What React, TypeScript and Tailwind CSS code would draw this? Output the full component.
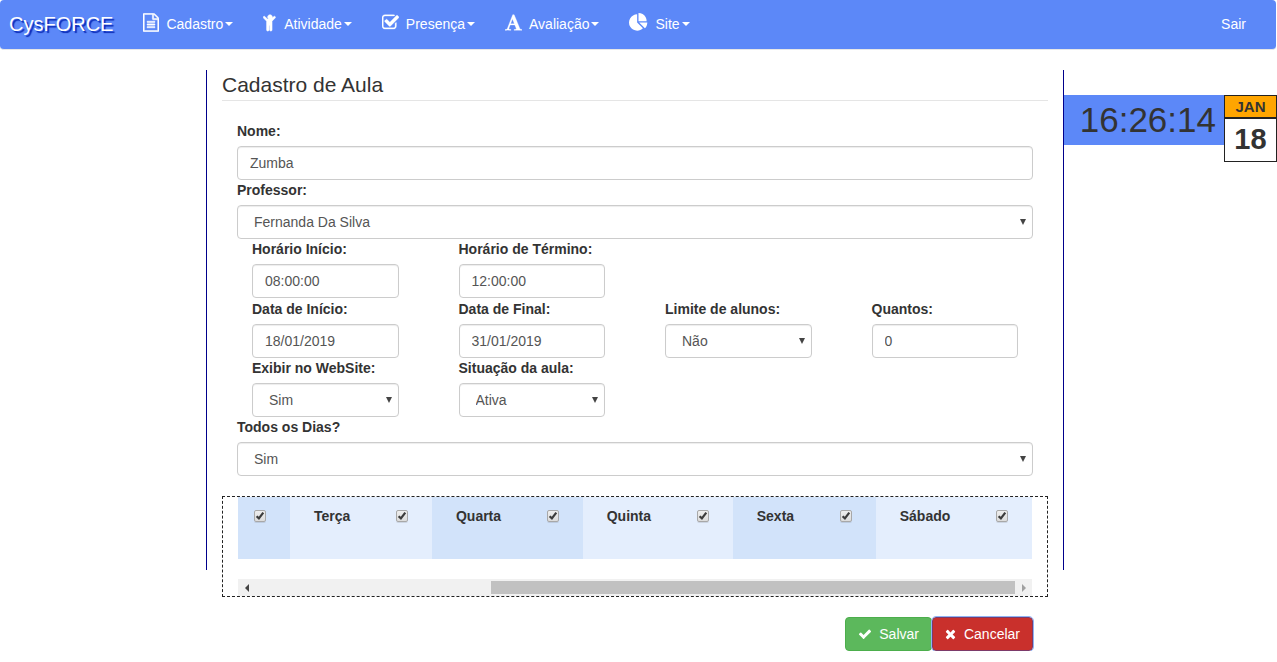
import type { ReactNode } from 'react';

const icons = {
  file: {
    box: '128 0 1536 1792',
    weight: 40,
    path: 'M1596 380q28 28 48 76t20 88v1152q0 40-28 68t-68 28h-1344q-40 0-68-28t-28-68v-1600q0-40 28-68t68-28h896q40 0 88 20t76 48zm-444-244v376h376q-10-29-22-41l-313-313q-12-12-41-22zm384 1528v-1024h-416q-40 0-68-28t-28-68v-416h-768v1536h1280zm-1024-864q0-14 9-23t23-9h704q14 0 23 9t9 23v64q0 14-9 23t-23 9h-704q-14 0-23-9t-9-23v-64zm736 224q14 0 23 9t9 23v64q0 14-9 23t-23 9h-704q-14 0-23-9t-9-23v-64q0-14 9-23t23-9h704zm0 256q14 0 23 9t9 23v64q0 14-9 23t-23 9h-704q-14 0-23-9t-9-23v-64q0-14 9-23t23-9h704z',
  },
  child: {
    box: '272 0 1248 1792',
    weight: 50,
    path: 'M1380 476l-292 292v824q0 46-33 79t-79 33-79-33-33-79v-384h-64v384q0 46-33 79t-79 33-79-33-33-79v-824l-292-292q-28-28-28-68t28-68q29-28 68.500-28t67.500 28l228 228h368l228-228q28-28 68-28t68 28q28 29 28 68.500t-28 67.500zm-260-92q0 93-65.500 158.500t-158.500 65.500-158.500-65.500-65.500-158.500 65.500-158.500 158.500-65.500 158.500 65.500 65.500 158.500z',
  },
  check: {
    box: '64 0 1664 1792',
    weight: 30,
    path: 'M1472 930v318q0 119-84.500 203.500t-203.500 84.500h-832q-119 0-203.500-84.500t-84.500-203.500v-832q0-119 84.500-203.500t203.500-84.500h832q63 0 117 25 15 7 18 23 3 17-9 29l-49 49q-10 10-23 10-3 0-9-2-23-6-45-6h-832q-66 0-113 47t-47 113v832q0 66 47 113t113 47h832q66 0 113-47t47-113v-254q0-13 9-22l64-64q10-10 23-10 6 0 12 3 20 8 20 29zm231-489l-814 814q-24 24-57 24t-57-24l-430-430q-24-24-24-57t24-57l110-110q24-24 57-24t57 24l263 263 647-647q24-24 57-24t57 24l110 110q24 24 24 57t-24 57z',
  },
  font: {
    box: '64 0 1664 1792',
    weight: 30,
    path: 'M789 559l-170 450q33 0 136.500 2t160.500 2q19 0 57-2-87-253-184-452zm-725 1105l2-79q23-7 56-12.500t57-10.500 49.500-14.500 44.500-29 31-50.500l237-616 280-724h128q8 14 11 21l205 480q33 78 106 257.500t114 274.500q15 34 58 144.500t72 168.500q20 45 35 57 19 15 88 29.500t84 20.500q6 38 6 57 0 5-.5 13.500t-.5 12.500q-63 0-190-8t-191-8q-76 0-215 7t-178 8q0-43 4-78l131-28q1 0 12.500-2.500t15.500-3.500 14.500-4.500 15-6.500 11-8 9-11 2.500-14q0-16-31-96.500t-72-177.500-42-100l-450-2q-26 58-76.500 195.500t-50.500 162.500q0 22 14 37.500t43.500 24.500 48.500 13.500 57 8.500 41 4q1 19 1 58 0 9-2 27-58 0-174.500-10t-174.500-10q-8 0-26.500 4t-21.500 4q-80 14-188 14z',
  },
  pie: {
    box: '0 0 1792 1792',
    weight: 0,
    path: 'M768 890l546 546q-106 108-247.500 168t-298.500 60q-209 0-385.500-103t-279.500-279.500-103-385.500 103-385.500 279.500-279.500 385.500-103v762zm187 6h773q0 157-60 298.500t-168 247.500zm709-128h-768v-768q209 0 385.500 103t279.500 279.500 103 385.500z',
  },
  tick: {
    box: '0 0 1792 1792',
    weight: 0,
    path: 'M1671 566q0 40-28 68l-724 724-136 136q-28 28-68 28t-68-28l-136-136-362-362q-28-28-28-68t28-68l136-136q28-28 68-28t68 28l294 295 656-657q28-28 68-28t68 28l136 136q28 28 28 68z',
  },
  times: {
    box: '192 0 1408 1792',
    weight: 0,
    path: 'M1490 1322q0 40-28 68l-136 136q-28 28-68 28t-68-28l-294-294-294 294q-28 28-68 28t-68-28l-136-136q-28-28-28-68t28-68l294-294-294-294q-28-28-28-68t28-68l136-136q28-28 68-28t68 28l294 294 294-294q28-28 68-28t68 28l136 136q28 28 28 68t-28 68l-294 294 294 294q28 28 28 68z',
  },
};

function Icon({ name, className }: { name: keyof typeof icons; className: string }) {
  return (
    <svg
      viewBox={icons[name].box}
      className={className}
      fill="currentColor"
      stroke="currentColor"
      strokeWidth={icons[name].weight}
      aria-hidden="true"
    >
      <path d={icons[name].path} />
    </svg>
  );
}

const menus: { label: string; icon: keyof typeof icons; size: string }[] = [
  { label: 'Cadastro', icon: 'file', size: 'mb-[3px] h-[19px] w-4' },
  { label: 'Atividade', icon: 'child', size: 'mb-[3px] h-[19px] w-[14px]' },
  { label: 'Presença', icon: 'check', size: 'mb-[3px] h-[19px] w-[17px]' },
  { label: 'Avaliação', icon: 'font', size: 'mb-[3px] h-[19px] w-[17px]' },
  { label: 'Site', icon: 'pie', size: 'mb-[3px] h-[19px] w-[19px]' },
];

const control =
  'block h-[34px] w-full appearance-none rounded-[4px] border border-[#ccc] bg-white text-[14px] leading-5 text-[#555] shadow-[inset_0_1px_1px_rgba(0,0,0,0.075)]';

function Field({ id, label, children }: { id: string; label: string; children: ReactNode }) {
  return (
    <div>
      <label htmlFor={id} className="mb-[5px] block font-bold">
        {label}
      </label>
      {children}
    </div>
  );
}

function TextField({ id, label, value }: { id: string; label: string; value: string }) {
  return (
    <Field id={id} label={label}>
      <input id={id} type="text" defaultValue={value} className={`${control} px-3`} />
    </Field>
  );
}

function SelectField({ id, label, value }: { id: string; label: string; value: string }) {
  return (
    <Field id={id} label={label}>
      <div className="relative">
        <select id={id} className={`${control} px-4`}>
          <option>{value}</option>
        </select>
        <svg
          viewBox="0 0 6 6"
          className="pointer-events-none absolute top-[14px] right-[7px] size-[6px]"
          fill="#444"
          aria-hidden="true"
        >
          <path d="M0 0h6L3 6z" />
        </svg>
      </div>
    </Field>
  );
}

function DayCheck({ id, label }: { id: string; label?: string }) {
  return (
    <span className="relative block size-3 shrink-0">
      <input
        id={id}
        type="checkbox"
        defaultChecked
        aria-label={label}
        className="peer block size-3 appearance-none rounded-[2px] border border-[#a8a8a8] bg-linear-to-b from-[#eee] to-[#dcdcdc] shadow-[0_1px_0_rgba(0,0,0,0.1)]"
      />
      <svg
        viewBox="0 0 12 12"
        className="pointer-events-none absolute inset-0 hidden size-3 peer-checked:block"
        fill="none"
        stroke="#3c3c3c"
        strokeWidth="2.2"
        aria-hidden="true"
      >
        <path d="M2.600 6.200 4.900 8.400 9.300 2.600" />
      </svg>
    </span>
  );
}

const days = ['Terça', 'Quarta', 'Quinta', 'Sexta', 'Sábado'];

export default function App() {
  return (
    <div className="font-['Liberation_Sans',Arial,sans-serif] text-[14px] leading-5 text-[#333]">
      <nav className="mr-px flex h-[50px] items-center rounded-[4px] border-b border-[#e7e7e7] bg-[#5c88f8] pr-[15px] pb-[2px] text-white">
        <a
          href="#"
          className="pr-[15px] pl-[9px] text-[20px] [text-shadow:2px_2px_1px_#0a2bb8]"
        >
          CysFORCE
        </a>
        <ul className="flex">
          {menus.map((m) => (
            <li key={m.label}>
              <a href="#" className="flex items-center px-[15px]">
                <Icon name={m.icon} className={m.size} />
                <span className="ml-[7px]">{m.label}</span>
                <svg
                  viewBox="0 0 8 4"
                  className="ml-[2px] h-1 w-2"
                  fill="currentColor"
                  aria-hidden="true"
                >
                  <path d="M0 0h8L4 4z" />
                </svg>
              </a>
            </li>
          ))}
        </ul>
        <a href="#" className="ml-auto px-[15px]">
          Sair
        </a>
      </nav>

      <div className="mt-5 grid grid-cols-[minmax(0,206fr)_minmax(0,858fr)_minmax(0,213fr)]">
        <main className="col-start-2 bg-no-repeat px-4 [background-image:linear-gradient(#00008b,#00008b),linear-gradient(#00008b,#00008b)] [background-position:left_top,right_top] [background-size:1px_500px]">
          <h1 className="border-b border-[#e5e5e5] text-[21px] leading-[30px]">Cadastro de Aula</h1>

          <form className="pt-5" onSubmit={(e) => e.preventDefault()}>
            <div className="px-[15px]">
              <TextField id="nome" label="Nome:" value="Zumba" />
              <SelectField id="professor" label="Professor:" value="Fernanda Da Silva" />
            </div>

            <div className="grid grid-cols-4">
              <div className="px-[30px]">
                <TextField id="hora-inicio" label="Horário Início:" value="08:00:00" />
              </div>
              <div className="px-[30px]">
                <TextField id="hora-termino" label="Horário de Término:" value="12:00:00" />
              </div>
            </div>
            <div className="mt-px grid grid-cols-4">
              <div className="px-[30px]">
                <TextField id="data-inicio" label="Data de Início:" value="18/01/2019" />
              </div>
              <div className="px-[30px]">
                <TextField id="data-final" label="Data de Final:" value="31/01/2019" />
              </div>
              <div className="px-[30px]">
                <SelectField id="limite" label="Limite de alunos:" value="Não" />
              </div>
              <div className="px-[30px]">
                <TextField id="quantos" label="Quantos:" value="0" />
              </div>
            </div>
            <div className="grid grid-cols-4">
              <div className="px-[30px]">
                <SelectField id="exibir" label="Exibir no WebSite:" value="Sim" />
              </div>
              <div className="px-[30px]">
                <SelectField id="situacao" label="Situação da aula:" value="Ativa" />
              </div>
            </div>
            <div className="px-[15px]">
              <SelectField id="todos-dias" label="Todos os Dias?" value="Sim" />
            </div>

            <div className="mt-5 border border-dashed border-[#222] px-[15px]">
              <table className="w-full">
                <tbody>
                  <tr className="h-[62px] align-top">
                    <td className="w-[52px] bg-[#d2e3fa] pt-[9px] pr-6 pl-4">
                      <div className="flex h-5 items-center">
                        <DayCheck id="dia-segunda" label="Segunda" />
                      </div>
                    </td>
                    {days.map((d) => (
                      <td key={d} className="px-6 pt-[9px] odd:bg-[#d2e3fa] even:bg-[#e4eefd]">
                        <div className="flex items-center justify-between gap-[45px]">
                          <label htmlFor={`dia-${d}`} className="font-bold">
                            {d}
                          </label>
                          <DayCheck id={`dia-${d}`} />
                        </div>
                      </td>
                    ))}
                  </tr>
                </tbody>
              </table>
              <div className="mt-5 flex h-[17px] items-center bg-[#f1f1f1]">
                <div className="flex w-[17px] justify-center">
                  <svg viewBox="0 0 4 8" className="h-2 w-1" fill="#444" aria-hidden="true">
                    <path d="M4 0v8L0 4z" />
                  </svg>
                </div>
                <div className="flex flex-1 justify-end">
                  <div className="h-[13px] w-[69%] bg-[#c1c1c1]" />
                </div>
                <div className="flex w-[17px] justify-center">
                  <svg viewBox="0 0 4 8" className="h-2 w-1" fill="#a0a0a0" aria-hidden="true">
                    <path d="M0 0v8l4-4z" />
                  </svg>
                </div>
              </div>
            </div>

            <div className="mt-5 flex justify-end pr-[15px] text-white">
              <button
                type="submit"
                className="flex h-[34px] items-center gap-[7px] rounded-[4px] border border-[#4cae4c] bg-[#5cb85c] px-3"
              >
                <Icon name="tick" className="size-[14px]" />
                Salvar
              </button>
              <button
                type="button"
                className="flex h-[34px] items-center gap-2 rounded-[4px] border border-[#7c3a6a] bg-[#c9302c] px-3 outline outline-[#8fb4f5]"
              >
                <Icon name="times" className="h-[14px] w-[11px]" />
                Cancelar
              </button>
            </div>
          </form>
        </main>

        <aside className="mt-[25px] flex items-start">
          <div className="h-[50px] flex-1 bg-[#5c88f8] pr-2 text-right text-[35px] leading-[50px]">
            16:26:14
          </div>
          <div className="w-[53px] border border-[#222] text-center font-bold">
            <div className="border-b-2 border-[#222] bg-[#ffa500] text-[15px] leading-[21px]">JAN</div>
            <div className="h-[42px] text-[29px] leading-10">18</div>
          </div>
        </aside>
      </div>
    </div>
  );
}
